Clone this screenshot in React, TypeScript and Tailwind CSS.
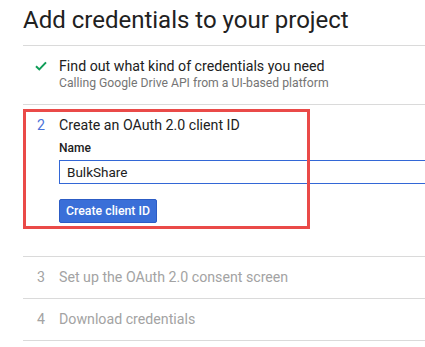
import { useState } from "react";

const steps = [
  { n: 3, title: "Set up the OAuth 2.0 consent screen" },
  { n: 4, title: "Download credentials" },
];

export default function App() {
  const [name, setName] = useState("BulkShare");

  return (
    <div className="w-[425px] h-[347px] overflow-hidden bg-white font-['Roboto','Liberation_Sans',sans-serif] text-[#212121]">
      <h1 className="pl-[23px] pt-[6px] pb-[11px] text-[24px] leading-[28px] font-normal whitespace-nowrap">
        Add credentials to your project
      </h1>

      <div className="ml-[23px] border-t border-[#dadada]">
        {/* Step 1 - done */}
        <div className="flex pl-[12px] pt-[11px] pb-[13px] border-b border-[#dadada]">
          <div className="w-[24px] h-[18px] shrink-0 flex items-center">
            <svg width="12" height="10" viewBox="0 0 12 10">
              <path d="M1 5.2 L4.3 8.4 L11 1.4" fill="none" stroke="#0f9d58" strokeWidth="2" />
            </svg>
          </div>
          <div>
            <div className="text-[14.2px] leading-[18px] whitespace-nowrap">Find out what kind of credentials you need</div>
            <div className="text-[12.2px] leading-[16px] text-[#757575] whitespace-nowrap">
              Calling Google Drive API from a UI-based platform
            </div>
          </div>
        </div>

        {/* Step 2 - active */}
        <div className="relative flex pl-[14px] pt-[11px] pb-[33px] border-b border-[#dadada]">
          <div className="w-[22px] shrink-0 text-[14.2px] leading-[18px] text-[#4a72d9]">2</div>
          <div className="shrink-0">
            <div className="text-[14.2px] leading-[18px] whitespace-nowrap">Create an OAuth 2.0 client ID</div>
            <div className="mt-[6px] text-[12px] leading-[16px] font-medium">Name</div>
            <input
              value={name}
              onChange={(e) => setName(e.target.value)}
              className="mt-[4px] block w-[400px] h-[24px] border border-[#3367d6] px-[7px] text-[13.5px] text-[#212121] outline-none"
            />
            <button className="mt-[15px] h-[24px] px-[6px] rounded-[2px] border border-[#2c5cc5] bg-[#3a6fd8] text-white text-[12.3px] font-medium leading-[22px]">
              Create client ID
            </button>
          </div>
          <div className="absolute left-0 top-[4px] w-[287px] h-[120px] border-[3px] border-[#ea4a48] pointer-events-none" />
        </div>

        {/* Steps 3 and 4 - pending */}
        {steps.map((s) => (
          <div key={s.n} className="flex pl-[14px] pt-[11px] pb-[12px] border-b border-[#dadada] text-[#a3a3a3]">
            <div className="w-[22px] shrink-0 text-[14.2px] leading-[18px]">{s.n}</div>
            <div className="text-[14.2px] leading-[18px] whitespace-nowrap">{s.title}</div>
          </div>
        ))}
      </div>
    </div>
  );
}
